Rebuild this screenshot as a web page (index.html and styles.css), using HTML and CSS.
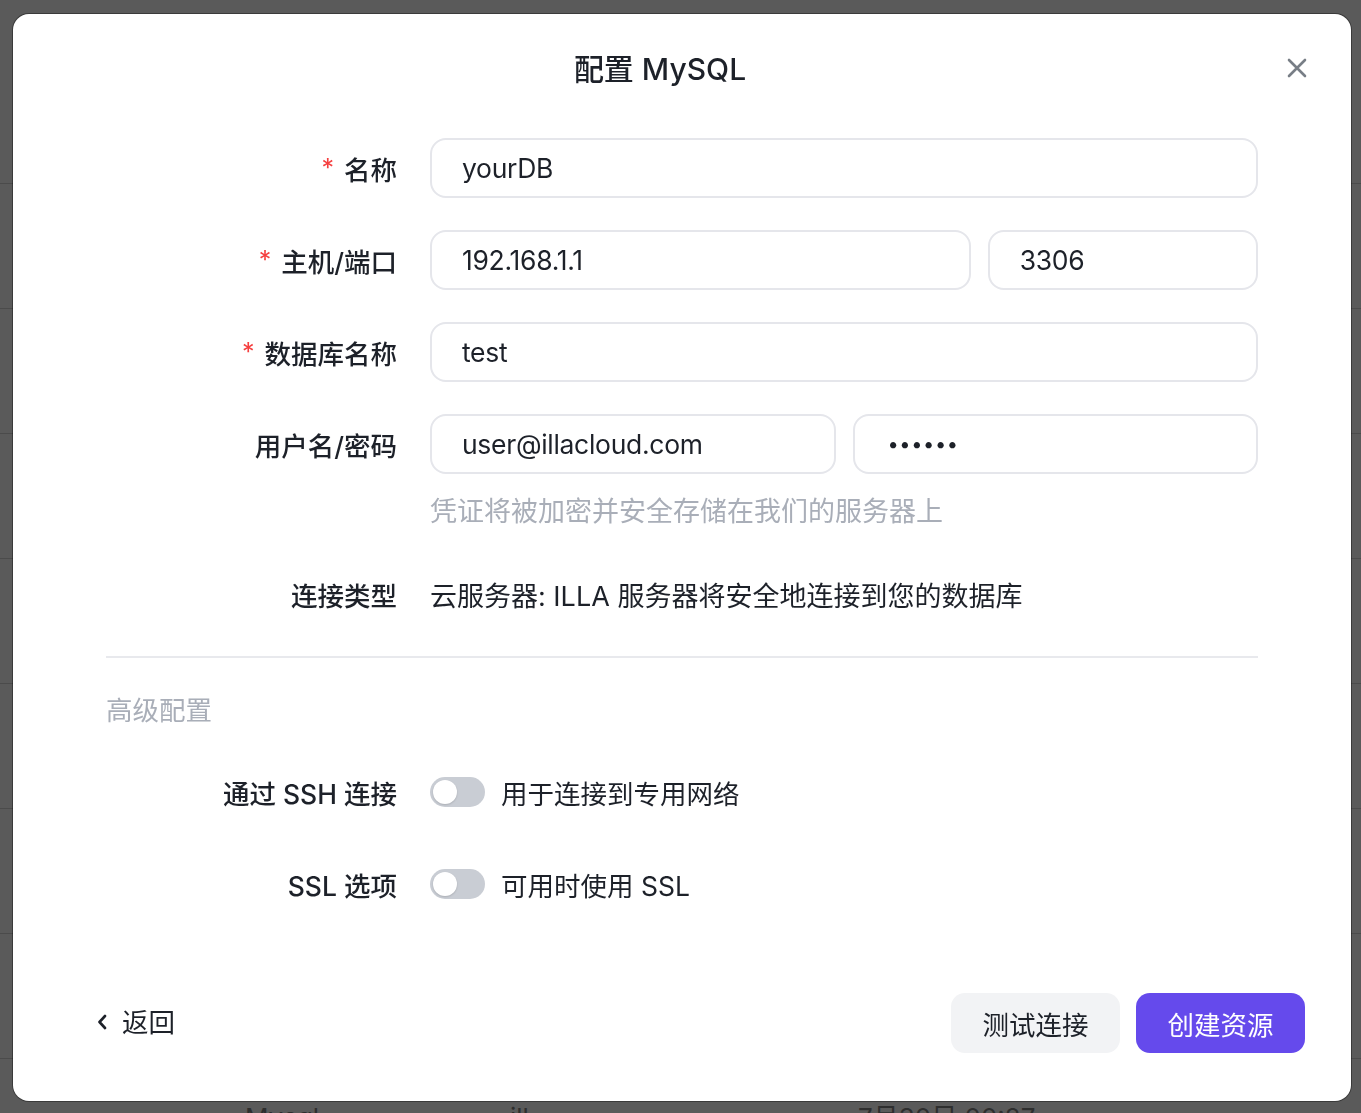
FILE: index.html
```html
<!DOCTYPE html>
<html lang="zh-CN">
<head>
<meta charset="utf-8">
<title>配置 MySQL</title>
<link rel="stylesheet" href="styles.css">
</head>
<body>
<div class="page">
  <div class="page-head"></div>
  <div class="page-row"></div>
  <div class="page-row"></div>
  <div class="page-row"></div>
  <div class="page-row"></div>
  <div class="page-row"></div>
  <div class="page-row"></div>
  <div class="page-row"></div>
  <div class="page-row page-row-text"><span class="cell cell-name">Mysql</span><span class="cell cell-type">ill</span><span class="cell cell-date">7月30日 00:27</span></div>
</div>

<div class="mask">
  <div class="modal">
    <header class="modal-header">
      <h1 class="modal-title">配置 MySQL</h1>
      <button class="close-btn" type="button" aria-label="关闭">
        <svg width="20" height="20" viewBox="0 0 20 20"><path d="M2 2 L18 18 M18 2 L2 18" stroke="#787e86" stroke-width="2.6" stroke-linecap="round" fill="none"/></svg>
      </button>
    </header>

    <div class="modal-body">
      <div class="form-grid">
        <div class="label"><span class="req">*</span>名称</div>
        <div class="ctrl"><input class="field" type="text" value="yourDB" readonly></div>

        <div class="label"><span class="req">*</span>主机/端口</div>
        <div class="ctrl ctrl-host">
          <input class="field" type="text" value="192.168.1.1" readonly>
          <input class="field" type="text" value="3306" readonly>
        </div>

        <div class="label"><span class="req">*</span>数据库名称</div>
        <div class="ctrl"><input class="field" type="text" value="test" readonly></div>

        <div class="label">用户名/密码</div>
        <div class="ctrl">
          <div class="ctrl-pair">
            <input class="field" type="text" value="user@illacloud.com" readonly>
            <input class="field field-pass" type="password" value="123456" readonly>
          </div>
          <div class="helper">凭证将被加密并安全存储在我们的服务器上</div>
        </div>

        <div class="label">连接类型</div>
        <div class="ctrl ctrl-text">云服务器: ILLA 服务器将安全地连接到您的数据库</div>
      </div>

      <div class="divider"></div>
      <div class="section-title">高级配置</div>

      <div class="form-grid form-grid-adv">
        <div class="label">通过 SSH 连接</div>
        <div class="ctrl ctrl-switch"><span class="switch"><span class="knob"></span></span><span>用于连接到专用网络</span></div>

        <div class="label">SSL 选项</div>
        <div class="ctrl ctrl-switch"><span class="switch"><span class="knob"></span></span><span>可用时使用 SSL</span></div>
      </div>
    </div>

    <footer class="modal-footer">
      <button class="back-btn" type="button">
        <svg width="10" height="16" viewBox="0 0 10 16"><path d="M8 2 L2.5 8 L8 14" stroke="#1d2129" stroke-width="2.6" stroke-linecap="round" stroke-linejoin="round" fill="none"/></svg>
        <span>返回</span>
      </button>
      <div class="actions">
        <button class="btn btn-gray" type="button">测试连接</button>
        <button class="btn btn-primary" type="button">创建资源</button>
      </div>
    </footer>
  </div>
</div>
</body>
</html>
```

FILE: styles.css
```css
* { box-sizing: border-box; }

html, body {
  margin: 0;
  padding: 0;
  height: 1113px;
  overflow: hidden;
}

body {
  background: #5a5a5a;
  font-family: "Inter", "Noto Sans CJK SC", sans-serif;
  color: #1d2129;
}

/* ---------- dimmed page behind ---------- */
.page {
  width: 100%;
  height: 1113px;
  overflow: hidden;
}
.page-head {
  height: 184px;
  border-bottom: 1px solid #4b4b4b;
}
.page-row {
  height: 125px;
  border-bottom: 1px solid #4b4b4b;
}
.page-row-text {
  display: flex;
  padding-top: 44px;
  font-size: 26px;
  line-height: 30px;
  color: #2e2e2e;
}
.cell-name { margin-left: 245px; width: 265px; }
.cell-type { width: 348px; }

/* ---------- overlay + modal ---------- */
.mask {
  position: fixed;
  inset: 0;
  padding: 14px 0 0 13px;
}

.modal {
  width: 1338px;
  height: 1087px;
  background: #ffffff;
  border-radius: 16px;
  box-shadow: 0 0 0 1px rgba(0, 0, 0, 0.35);
  display: flex;
  flex-direction: column;
}

.modal-header {
  height: 110px;
  display: grid;
  grid-template-columns: 1fr 46px;
  align-items: center;
  padding: 0 44px 0 46px;
}

.modal-title {
  margin: 0;
  text-align: center;
  font-size: 30px;
  font-weight: 500;
  line-height: 40px;
  color: #1d2129;
}

.close-btn {
  justify-self: end;
  width: 20px;
  height: 20px;
  padding: 0;
  border: 0;
  background: none;
  display: flex;
  margin-top: -3px;
}

.modal-body {
  padding: 14px 93px 0;
}

.form-grid {
  display: grid;
  grid-template-columns: 291px 828px;
  column-gap: 33px;
  row-gap: 32px;
}

.form-grid-adv {
  margin-top: 32px;
}

.label {
  height: 60px;
  display: flex;
  align-items: center;
  justify-content: flex-end;
  font-size: 26.5px;
  font-weight: 500;
  color: #1d2129;
  white-space: nowrap;
}

.req {
  color: #f53f3f;
  font-size: 25px;
  font-weight: 400;
  margin-right: 10px;
  position: relative;
  top: 0;
}

.ctrl-host {
  display: grid;
  grid-template-columns: 2fr 1fr;
  column-gap: 17px;
}

.ctrl-pair {
  display: grid;
  grid-template-columns: 1fr 1fr;
  column-gap: 17px;
}

.field {
  display: block;
  width: 100%;
  height: 60px;
  border: 2px solid #e5e6eb;
  border-radius: 16px;
  background: #ffffff;
  padding: 0 20px 0 30px;
  font-family: "Inter", "Noto Sans CJK SC", sans-serif;
  font-size: 26.5px;
  letter-spacing: -0.3px;
  color: #1d2129;
  outline: none;
}

.field-pass {
  font-size: 20px;
  letter-spacing: 0.6px;
  padding-left: 33px;
}

.helper {
  margin-top: 18px;
  line-height: 40px;
  font-size: 27px;
  color: #a9aeb8;
}

.ctrl-text {
  height: 60px;
  display: flex;
  align-items: center;
  font-size: 27px;
  color: #1d2129;
}

.divider {
  margin-top: 32px;
  height: 2px;
  background: #e8e9ed;
}

.section-title {
  margin-top: 32px;
  line-height: 40px;
  font-size: 26.5px;
  color: #a9aeb8;
}

.ctrl-switch {
  height: 60px;
  display: flex;
  align-items: center;
  gap: 16px;
  font-size: 26.5px;
  color: #1d2129;
}

.switch {
  width: 55px;
  height: 30px;
  border-radius: 15px;
  background: #c9cdd4;
  display: flex;
  align-items: center;
  padding: 0 3px;
  flex: none;
}

.knob {
  width: 24px;
  height: 24px;
  border-radius: 50%;
  background: #ffffff;
  box-shadow: 0 1px 2px rgba(0, 0, 0, 0.15);
}

/* ---------- footer ---------- */
.modal-footer {
  margin-top: auto;
  padding: 0 46px 48px 84px;
  display: flex;
  align-items: center;
  justify-content: space-between;
}

.back-btn {
  display: flex;
  align-items: center;
  gap: 15px;
  border: 0;
  background: none;
  padding: 0;
  font-family: "Inter", "Noto Sans CJK SC", sans-serif;
  font-size: 26.5px;
  line-height: 36px;
  color: #1d2129;
  margin-top: -3px;
}

.actions {
  display: flex;
  gap: 16px;
}

.btn {
  width: 169px;
  height: 60px;
  border: 0;
  border-radius: 14px;
  font-family: "Inter", "Noto Sans CJK SC", sans-serif;
  font-size: 26.5px;
  display: flex;
  align-items: center;
  justify-content: center;
}

.btn-gray {
  background: #f2f3f5;
  color: #1d2129;
}

.btn-primary {
  background: #654aec;
  color: #ffffff;
}
```
